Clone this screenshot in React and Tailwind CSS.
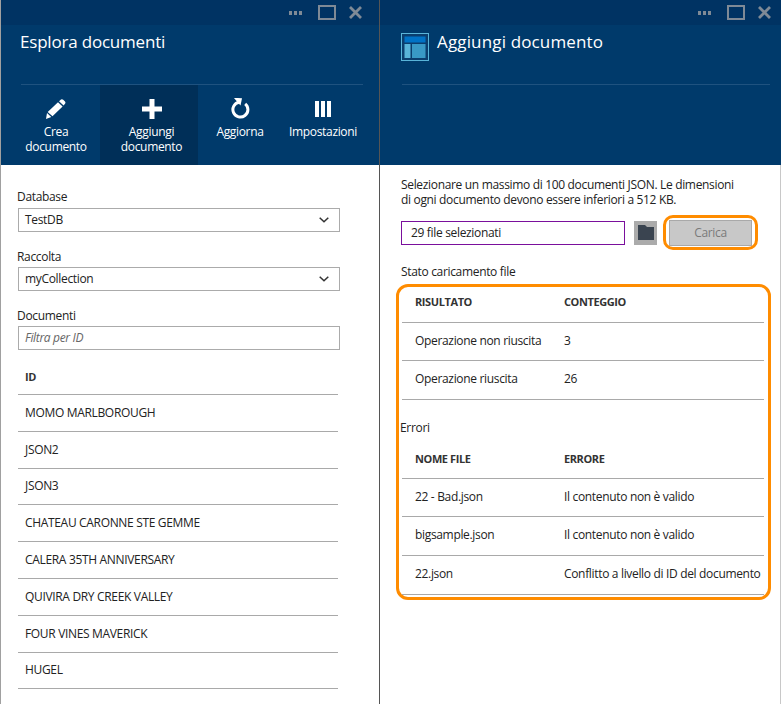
const font = { fontFamily: '"Open Sans","Noto Sans",sans-serif' };

function WindowControls({ end }) {
  return (
    <div className={`h-[25px] bg-[#003363] flex items-center justify-end shrink-0 ${end}`}>
      <svg width="13" height="4" viewBox="0 0 13 4" className="mr-[16px]">
        <rect x="0" y="0" width="3" height="4" fill="#7f8a96" />
        <rect x="5" y="0" width="3" height="4" fill="#7f8a96" />
        <rect x="10" y="0" width="3" height="4" fill="#7f8a96" />
      </svg>
      <svg width="18" height="15" viewBox="0 0 18 15" className="mr-[13px]">
        <rect x="1" y="1" width="16" height="13" fill="none" stroke="#7f8a96" strokeWidth="2" />
      </svg>
      <svg width="13" height="13" viewBox="0 0 13 13">
        <path d="M1 1 L12 12 M12 1 L1 12" stroke="#7f8a96" strokeWidth="2.8" />
      </svg>
    </div>
  );
}

function Command({ icon, label, active, w }) {
  return (
    <div className={`h-[80px] flex flex-col items-center pt-[13px] ${w} ${active ? "bg-[#002f58]" : ""}`}>
      <div className="h-[21px] flex items-center justify-center">{icon}</div>
      <div className="mt-[5px] text-white text-[12px] leading-[15px] text-center">{label}</div>
    </div>
  );
}

const Pencil = (
  <svg width="20" height="20" viewBox="0 0 20 20">
    <path d="M15 0.6 Q16.2 0 17.2 0.8 L19 2.5 Q19.9 3.5 19.2 4.6 L17.6 6.4 L13 2.3 Z M12 3.3 L16.6 7.5 L6.5 17.3 L1.7 12.9 Z M1 14 L5.3 18 L0 20 Z" fill="#fff" />
  </svg>
);
const Plus = (
  <svg width="20" height="20" viewBox="0 0 20 20">
    <path d="M7.5 0 H12.5 V7.5 H20 V12.5 H12.5 V20 H7.5 V12.5 H0 V7.5 H7.5 Z" fill="#fff" />
  </svg>
);
const Refresh = (
  <svg width="20" height="21" viewBox="0 0 20 21">
    <path d="M9 4.2 A7.5 7.5 0 1 0 15.2 5.8" fill="none" stroke="#fff" strokeWidth="3" />
    <path d="M2.8 0 L11 0.4 L9.5 7.8 Z" fill="#fff" transform="translate(1 -0.2)" />
  </svg>
);
const Columns = (
  <svg width="16" height="16" viewBox="0 0 16 16">
    <rect x="0" y="0" width="4" height="16" fill="#fff" />
    <rect x="6" y="0" width="4" height="16" fill="#fff" />
    <rect x="12" y="0" width="4" height="16" fill="#fff" />
  </svg>
);

function Chevron() {
  return (
    <svg width="10" height="6" viewBox="0 0 10 6">
      <path d="M0.7 0.7 L5 4.8 L9.3 0.7" fill="none" stroke="#333" strokeWidth="1.5" />
    </svg>
  );
}

function SelectBox({ value }) {
  return (
    <div className="h-[24px] w-[322px] border border-[#ababab] flex items-center justify-between pl-[6px] pr-[10px] text-[12px] text-[#222]">
      <span>{value}</span>
      <Chevron />
    </div>
  );
}

const docs = [
  "MOMO MARLBOROUGH",
  "JSON2",
  "JSON3",
  "CHATEAU CARONNE STE GEMME",
  "CALERA 35TH ANNIVERSARY",
  "QUIVIRA DRY CREEK VALLEY",
  "FOUR VINES MAVERICK",
  "HUGEL",
];

function Row({ a, b, h }) {
  return (
    <div className={`flex items-center border-b border-[#a9a9a9] pb-[2px] text-[12px] text-[#222] ${h}`}>
      <div className="w-[162px] shrink-0 pl-[13px] whitespace-nowrap">{a}</div>
      <div className="whitespace-nowrap">{b}</div>
    </div>
  );
}

function HeadRow({ a, b, h }) {
  return (
    <div className={`flex items-center border-b border-[#a9a9a9] font-bold text-[11px] tracking-[-0.4px] text-[#333] ${h}`}>
      <div className="w-[162px] shrink-0 pl-[13px] whitespace-nowrap">{a}</div>
      <div className="whitespace-nowrap">{b}</div>
    </div>
  );
}

export default function App() {
  return (
    <div className="w-[781px] h-[704px] bg-white flex overflow-hidden tracking-[-0.33px]" style={font}>
      <div className="w-[380px] h-full border-l border-[#a0a0a0] border-r border-r-[#555] flex flex-col shrink-0">
        <WindowControls end="pr-[17px]" />
        <div className="h-[140px] bg-[#003a6b] flex flex-col shrink-0">
          <div className="h-[60px] ml-[20px] mr-[16px] pt-[5px] text-white text-[17px] leading-[24px] tracking-[-0.2px] border-b border-[#1f527f]">
            <span className="-ml-px">Esplora documenti</span>
          </div>
          <div className="flex">
            <Command w="w-[99px] pl-[11px]" icon={Pencil} label={<>Crea<br />documento</>} />
            <Command w="w-[98px] pl-[5px]" icon={Plus} label={<>Aggiungi<br />documento</>} active />
            <Command w="w-[84px]" icon={Refresh} label="Aggiorna" />
            <Command w="w-[82px]" icon={Columns} label="Impostazioni" />
          </div>
        </div>
        <div className="pl-[17px] pt-[23px] text-[12px] text-[#222]">
          <div className="leading-[17px] mb-[3px] -ml-px">Database</div>
          <SelectBox value="TestDB" />
          <div className="leading-[17px] mt-[16px] mb-[2px] -ml-px">Raccolta</div>
          <SelectBox value="myCollection" />
          <div className="leading-[17px] mt-[16px] mb-[2px] -ml-px">Documenti</div>
          <div className="h-[24px] w-[322px] border border-[#ababab] flex items-center pl-[6px] italic text-[#666]">
            Filtra per ID
          </div>
          <div className="w-[320px] mt-[14px]">
            <div className="h-[31px] pl-[7px] pb-[4px] flex items-center font-bold text-[11px] border-b border-[#a9a9a9] text-[#333]">ID</div>
            {docs.map((d) => (
              <div key={d} className="h-[36.8px] pl-[7px] flex items-center border-b border-[#a9a9a9] whitespace-nowrap">{d}</div>
            ))}
          </div>
        </div>
      </div>

      <div className="flex-1 flex flex-col">
        <WindowControls end="pr-[10px]" />
        <div className="h-[140px] bg-[#003a6b] shrink-0 pl-[22px] pr-[11px]">
          <div className="h-[60px] flex border-b border-[#1f527f]">
            <svg width="28" height="28" viewBox="0 0 28 28" className="mt-[8px] shrink-0 -ml-[1px]">
              <rect x="0.5" y="0.5" width="27" height="27" fill="#0b3e6e" stroke="#59b4d9" />
              <rect x="3.5" y="3.5" width="21" height="6" fill="#0072c6" />
              <rect x="3.5" y="11" width="6" height="14" fill="#59b4d9" />
              <rect x="11" y="11" width="13.5" height="14" fill="#3999c6" />
            </svg>
            <div className="ml-[8px] pt-[5px] text-white text-[17px] leading-[24px] tracking-[0.15px]">Aggiungi documento</div>
          </div>
        </div>
        <div className="flex-1 border-r border-[#c8c8c8] pl-[21px] pt-[13px] text-[12px] text-[#222]">
          <div className="leading-[14.5px]">
            Selezionare un massimo di 100 documenti JSON. Le dimensioni
            <br />
            di ogni documento devono essere inferiori a 512 KB.
          </div>
          <div className="flex items-center mt-[8px]">
            <div className="h-[24px] w-[224px] border border-[#7a0f9c] flex items-center pl-[9px]">29 file selezionati</div>
            <div className="w-[23px] h-[24px] bg-[#ababab] ml-[9px] flex items-center justify-center">
              <svg width="16" height="15" viewBox="0 0 16 15">
                <path d="M0 0 H7 L9 2 H16 V15 H0 Z" fill="#3a4450" />
              </svg>
            </div>
            <div className="ml-[6px] w-[95px] h-[35px] border-[3px] border-[#ff8c00] rounded-[10px] flex items-start justify-center pt-[2px]">
              <div className="w-[83px] h-[26px] bg-[#c8c8c8] border border-[#a9a9a9] flex items-center justify-center text-[#7a7a7a]">Carica</div>
            </div>
          </div>
          <div className="leading-[17px] mt-[13px]">Stato caricamento file</div>
          <div className="-ml-[5px] mt-[4px] w-[375px] h-[316px] border-[3px] border-[#ff8c00] rounded-[12px] pl-[3px] pr-[4px]">
            <HeadRow a="RISULTATO" b="CONTEGGIO" h="h-[36px] pb-[4px]" />
            <Row a="Operazione non riuscita" b="3" h="h-[38px]" />
            <Row a="Operazione riuscita" b="26" h="h-[39px]" />
            <div className="h-[20px] mt-[18px] leading-[20px] -ml-[2px]">Errori</div>
            <HeadRow a="NOME FILE" b="ERRORE" h="h-[41px] pt-[2px]" />
            <Row a="22 - Bad.json" b="Il contenuto non è valido" h="h-[38px]" />
            <Row a="bigsample.json" b="Il contenuto non è valido" h="h-[39px]" />
            <Row a="22.json" b="Conflitto a livello di ID del documento" h="h-[39px]" />
          </div>
        </div>
      </div>
    </div>
  );
}
